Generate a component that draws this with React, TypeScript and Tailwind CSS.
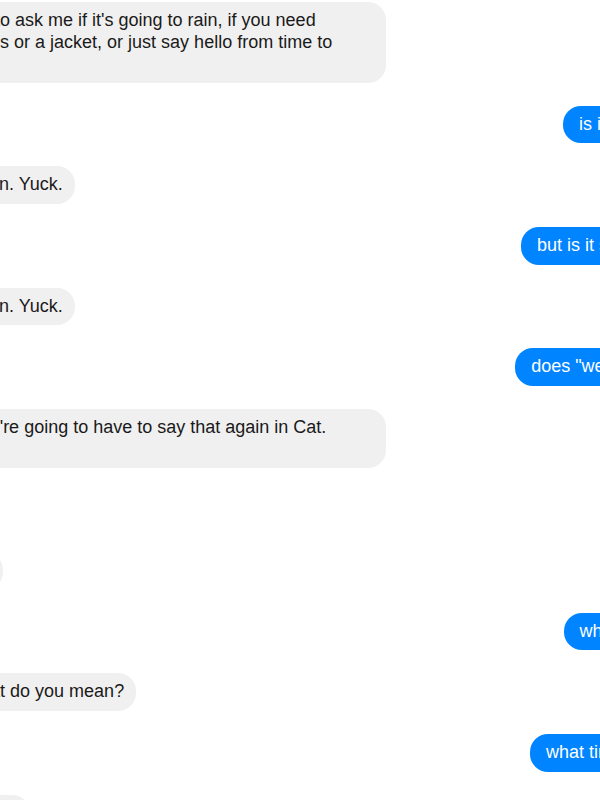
type Message = {
    from: "cat" | "me";
    text: string;
};

// the thread is wider than the window: the left and right ends of the bubbles run past its edges
const messages: Message[] = [
    { from: "cat", text: "Feel free to ask me if it's going to rain, if you need sunglasses or a jacket, or just say hello from time to time." },
    { from: "me", text: "is it raining?" },
    { from: "cat", text: "Expect rain. Yuck." },
    { from: "me", text: "but is it snowing?" },
    { from: "cat", text: "Expect rain. Yuck." },
    { from: "me", text: 'does "wet" count?' },
    { from: "cat", text: "Sorry, you're going to have to say that again in Cat. Meow." },
    { from: "cat", text: "Sorry." },
    { from: "cat", text: "I'm a cat." },
    { from: "me", text: "what's that?" },
    { from: "cat", text: "Huh? what do you mean?" },
    { from: "me", text: "what time is it??" },
    { from: "cat", text: "It's 3:45 PM." },
];

function Bubble({ message }: { message: Message }) {
    if (message.from === "me") {
        return (
            <div className="self-end whitespace-nowrap rounded-[18px] bg-[#0084ff] py-2 px-4 text-white">
                {message.text}
            </div>
        );
    }
    return (
        <div className="self-start max-w-[479px] rounded-[18px] bg-[#f1f0f0] py-2 px-3 text-[#1a1a1a]">
            {message.text}
        </div>
    );
}

export default function App() {
    return (
        <div className="h-[800px] w-[600px] overflow-hidden bg-white font-['Liberation_Sans',Arial,sans-serif] text-[18px] leading-[21.5px]">
            <div className="-ml-[93px] flex w-[784px] flex-col gap-[23.2px] pt-[2px]">
                {messages.map((m, i) => (
                    <Bubble key={i} message={m} />
                ))}
            </div>
        </div>
    );
}
